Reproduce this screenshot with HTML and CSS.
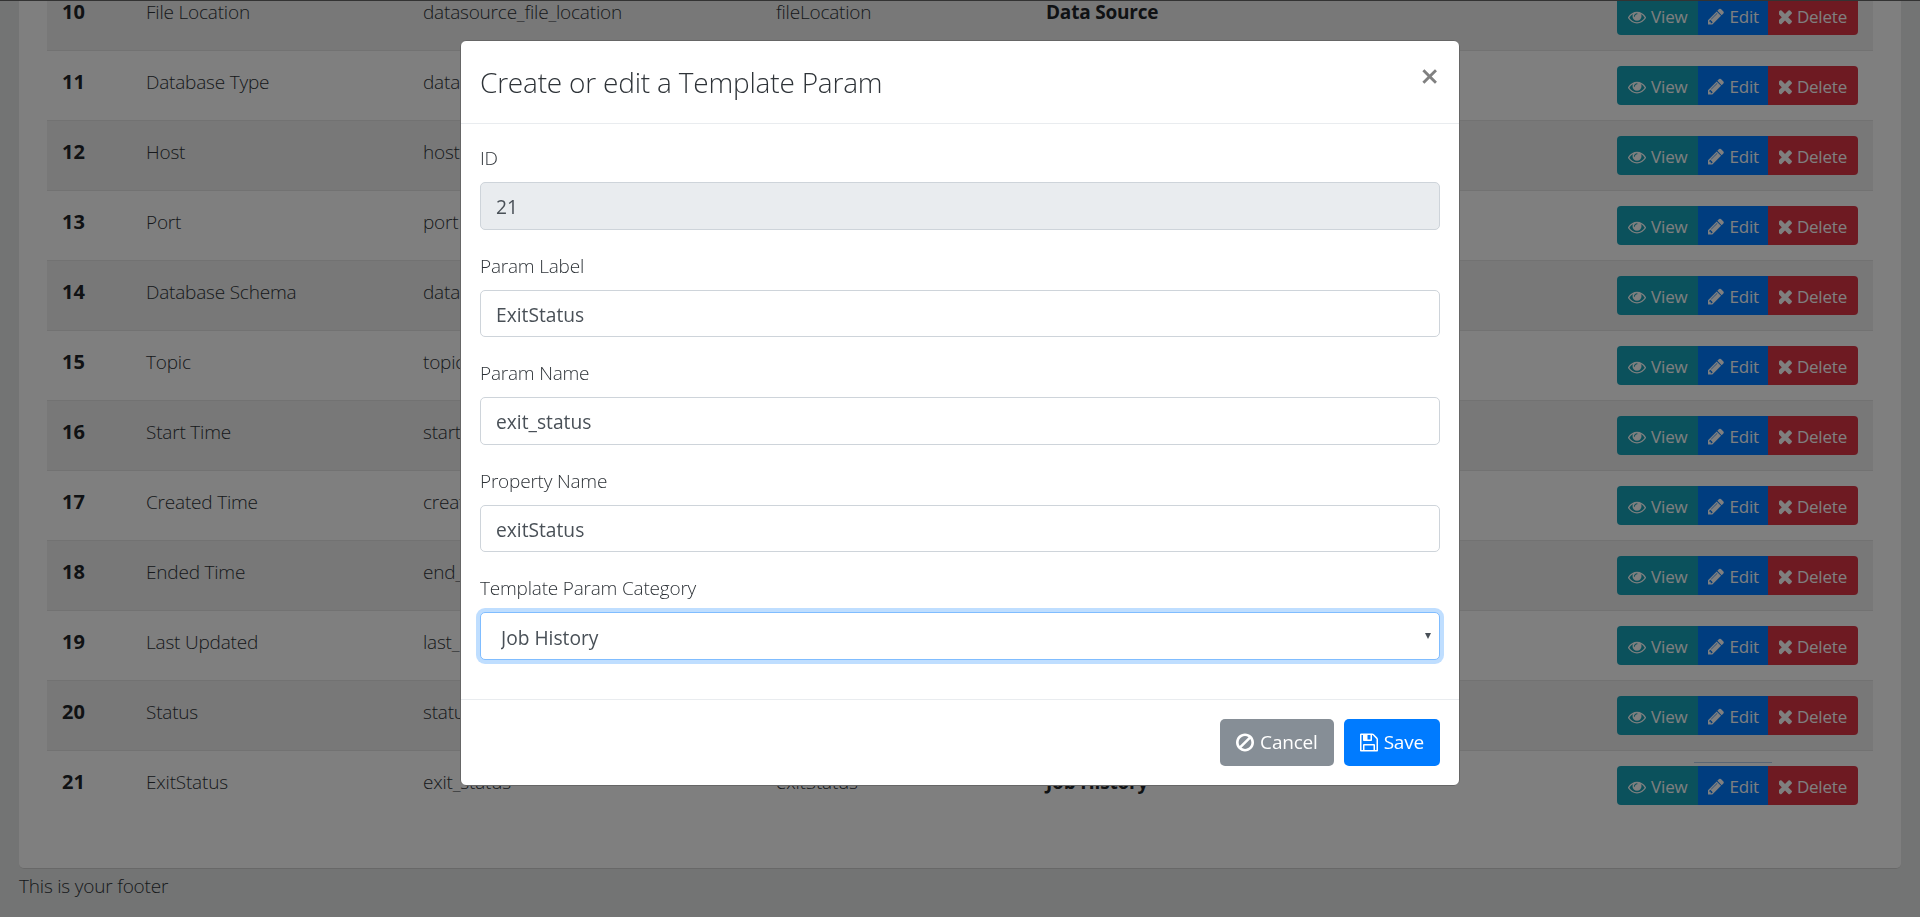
FILE: index.html
```html
<!DOCTYPE html>
<html lang="en">

<head>
    <meta charset="UTF-8">
    <title>Template Params</title>
    <link rel="stylesheet" href="styles.css">
</head>

<body>
    <svg class="icon-defs" xmlns="http://www.w3.org/2000/svg">
        <symbol id="i-eye" viewBox="0 0 1792 1792"><path d="M1664 960q-152-236-381-355 61 104 61 225 0 185-131.5 316.5t-316.5 131.5-316.5-131.5-131.5-316.5q0-121 61-225-229 119-381 355 133 205 333.5 326.5t434.5 121.5 434.5-121.5 333.5-326.5zm-720-384q0-20-14-34t-34-14q-125 0-214.5 89.5t-89.5 214.5q0 20 14 34t34 14 34-14 14-34q0-86 61-147t147-61q20 0 34-14t14-34zm848 384q0 34-20 69-140 230-376.5 368.5t-499.5 138.5-499.5-139-376.5-368q-20-35-20-69t20-69q140-229 376.5-368t499.5-139 499.5 139 376.5 368q20 35 20 69z"/></symbol>
        <symbol id="i-pencil" viewBox="128 0 1536 1792"><path d="M491 1536l91-91-235-235-91 91v107h128v128h107zm523-928q0-22-22-22-10 0-17 7l-542 542q-7 7-7 17 0 22 22 22 10 0 17-7l542-542q7-7 7-17zm-54-192l416 416-832 832h-416v-416zm683 96q0 53-37 90l-166 166-416-416 166-165q36-38 90-38 53 0 91 38l235 234q37 39 37 91z"/></symbol>
        <symbol id="i-times" viewBox="194 0 1104 1792"><path d="M1298 1322q0 40-28 68l-136 136q-28 28-68 28t-68-28l-294-294-294 294q-28 28-68 28t-68-28l-136-136q-28-28-28-68t28-68l294-294-294-294q-28-28-28-68t28-68l136-136q28-28 68-28t68 28l294 294 294-294q28-28 68-28t68 28l136 136q28 28 28 68t-28 68l-294 294 294 294q28 28 28 68z"/></symbol>
        <symbol id="i-ban" viewBox="128 0 1536 1792"><path d="M1440 893q0-161-87-295l-754 753q137 89 297 89 111 0 211.5-43.5t173.5-116.5 116-174.5 43-212.5zm-999 299l755-754q-135-91-300-91-148 0-273 73t-198 199-73 274q0 162 89 299zm1223-299q0 157-61 300t-163.5 246-245 164-298.5 61-298.5-61-245-164-163.5-246-61-300 61-299.5 163.5-245.5 245-164 298.5-61 298.5 61 245 164 163.5 245.5 61 299.5z"/></symbol>
        <symbol id="i-save" viewBox="128 0 1536 1792"><path d="M512 1536h768v-384h-768v384zm896 0h128v-896q0-14-10-38.5t-20-34.5l-281-281q-10-10-34-20t-39-10v416q0 40-28 68t-68 28h-576q-40 0-68-28t-28-68v-416h-128v1280h128v-416q0-40 28-68t68-28h832q40 0 68 28t28 68v416zm-384-928v-320q0-13-9.5-22.5t-22.5-9.5h-192q-13 0-22.5 9.5t-9.5 22.5v320q0 13 9.5 22.5t22.5 9.5h192q13 0 22.5-9.5t9.5-22.5zm640 32v928q0 40-28 68t-68 28h-1344q-40 0-68-28t-28-68v-1344q0-40 28-68t68-28h928q40 0 88 20t76 48l280 280q28 28 48 76t20 88z"/></symbol>
    </svg>

    <div class="page">
        <div class="card">
            <table class="params">
                <colgroup>
                    <col class="col-id">
                    <col class="col-label">
                    <col class="col-name">
                    <col class="col-prop">
                    <col class="col-cat">
                    <col>
                </colgroup>
                <tbody>
                    <tr>
                        <th>10</th>
                        <td>File Location</td>
                        <td>datasource_file_location</td>
                        <td>fileLocation</td>
                        <td class="cat">Data Source</td>
                        <td>
                            <div class="btn-group"><a class="btn btn-view"><svg class="icon icon-eye"><use href="#i-eye"/></svg>View</a><a class="btn btn-edit"><svg class="icon icon-pencil"><use href="#i-pencil"/></svg>Edit</a><a class="btn btn-delete"><svg class="icon icon-times"><use href="#i-times"/></svg>Delete</a></div>
                        </td>
                    </tr>
                    <tr>
                        <th>11</th>
                        <td>Database Type</td>
                        <td>database_type</td>
                        <td>databaseType</td>
                        <td class="cat">Data Source</td>
                        <td>
                            <div class="btn-group"><a class="btn btn-view"><svg class="icon icon-eye"><use href="#i-eye"/></svg>View</a><a class="btn btn-edit"><svg class="icon icon-pencil"><use href="#i-pencil"/></svg>Edit</a><a class="btn btn-delete"><svg class="icon icon-times"><use href="#i-times"/></svg>Delete</a></div>
                        </td>
                    </tr>
                    <tr>
                        <th>12</th>
                        <td>Host</td>
                        <td>host</td>
                        <td>host</td>
                        <td class="cat">Data Source</td>
                        <td>
                            <div class="btn-group"><a class="btn btn-view"><svg class="icon icon-eye"><use href="#i-eye"/></svg>View</a><a class="btn btn-edit"><svg class="icon icon-pencil"><use href="#i-pencil"/></svg>Edit</a><a class="btn btn-delete"><svg class="icon icon-times"><use href="#i-times"/></svg>Delete</a></div>
                        </td>
                    </tr>
                    <tr>
                        <th>13</th>
                        <td>Port</td>
                        <td>port</td>
                        <td>port</td>
                        <td class="cat">Data Source</td>
                        <td>
                            <div class="btn-group"><a class="btn btn-view"><svg class="icon icon-eye"><use href="#i-eye"/></svg>View</a><a class="btn btn-edit"><svg class="icon icon-pencil"><use href="#i-pencil"/></svg>Edit</a><a class="btn btn-delete"><svg class="icon icon-times"><use href="#i-times"/></svg>Delete</a></div>
                        </td>
                    </tr>
                    <tr>
                        <th>14</th>
                        <td>Database Schema</td>
                        <td>database_schema</td>
                        <td>databaseSchema</td>
                        <td class="cat">Data Source</td>
                        <td>
                            <div class="btn-group"><a class="btn btn-view"><svg class="icon icon-eye"><use href="#i-eye"/></svg>View</a><a class="btn btn-edit"><svg class="icon icon-pencil"><use href="#i-pencil"/></svg>Edit</a><a class="btn btn-delete"><svg class="icon icon-times"><use href="#i-times"/></svg>Delete</a></div>
                        </td>
                    </tr>
                    <tr>
                        <th>15</th>
                        <td>Topic</td>
                        <td>topic</td>
                        <td>topic</td>
                        <td class="cat">Data Source</td>
                        <td>
                            <div class="btn-group"><a class="btn btn-view"><svg class="icon icon-eye"><use href="#i-eye"/></svg>View</a><a class="btn btn-edit"><svg class="icon icon-pencil"><use href="#i-pencil"/></svg>Edit</a><a class="btn btn-delete"><svg class="icon icon-times"><use href="#i-times"/></svg>Delete</a></div>
                        </td>
                    </tr>
                    <tr>
                        <th>16</th>
                        <td>Start Time</td>
                        <td>start_time</td>
                        <td>startTime</td>
                        <td class="cat">Job History</td>
                        <td>
                            <div class="btn-group"><a class="btn btn-view"><svg class="icon icon-eye"><use href="#i-eye"/></svg>View</a><a class="btn btn-edit"><svg class="icon icon-pencil"><use href="#i-pencil"/></svg>Edit</a><a class="btn btn-delete"><svg class="icon icon-times"><use href="#i-times"/></svg>Delete</a></div>
                        </td>
                    </tr>
                    <tr>
                        <th>17</th>
                        <td>Created Time</td>
                        <td>created_time</td>
                        <td>createdTime</td>
                        <td class="cat">Job History</td>
                        <td>
                            <div class="btn-group"><a class="btn btn-view"><svg class="icon icon-eye"><use href="#i-eye"/></svg>View</a><a class="btn btn-edit"><svg class="icon icon-pencil"><use href="#i-pencil"/></svg>Edit</a><a class="btn btn-delete"><svg class="icon icon-times"><use href="#i-times"/></svg>Delete</a></div>
                        </td>
                    </tr>
                    <tr>
                        <th>18</th>
                        <td>Ended Time</td>
                        <td>end_time</td>
                        <td>endTime</td>
                        <td class="cat">Job History</td>
                        <td>
                            <div class="btn-group"><a class="btn btn-view"><svg class="icon icon-eye"><use href="#i-eye"/></svg>View</a><a class="btn btn-edit"><svg class="icon icon-pencil"><use href="#i-pencil"/></svg>Edit</a><a class="btn btn-delete"><svg class="icon icon-times"><use href="#i-times"/></svg>Delete</a></div>
                        </td>
                    </tr>
                    <tr>
                        <th>19</th>
                        <td>Last Updated</td>
                        <td>last_updated</td>
                        <td>lastUpdated</td>
                        <td class="cat">Job History</td>
                        <td>
                            <div class="btn-group"><a class="btn btn-view"><svg class="icon icon-eye"><use href="#i-eye"/></svg>View</a><a class="btn btn-edit"><svg class="icon icon-pencil"><use href="#i-pencil"/></svg>Edit</a><a class="btn btn-delete"><svg class="icon icon-times"><use href="#i-times"/></svg>Delete</a></div>
                        </td>
                    </tr>
                    <tr>
                        <th>20</th>
                        <td>Status</td>
                        <td>status</td>
                        <td>status</td>
                        <td class="cat">Job History</td>
                        <td>
                            <div class="btn-group"><a class="btn btn-view"><svg class="icon icon-eye"><use href="#i-eye"/></svg>View</a><a class="btn btn-edit"><svg class="icon icon-pencil"><use href="#i-pencil"/></svg>Edit</a><a class="btn btn-delete"><svg class="icon icon-times"><use href="#i-times"/></svg>Delete</a></div>
                        </td>
                    </tr>
                    <tr>
                        <th>21</th>
                        <td>ExitStatus</td>
                        <td>exit_status</td>
                        <td>exitStatus</td>
                        <td class="cat">Job History</td>
                        <td>
                            <div class="btn-group"><a class="btn btn-view"><svg class="icon icon-eye"><use href="#i-eye"/></svg>View</a><a class="btn btn-edit btn-focused"><svg class="icon icon-pencil"><use href="#i-pencil"/></svg>Edit</a><a class="btn btn-delete"><svg class="icon icon-times"><use href="#i-times"/></svg>Delete</a></div>
                        </td>
                    </tr>
                </tbody>
            </table>
        </div>
        <footer class="footer">This is your footer</footer>
    </div>

    <div class="backdrop"></div>

    <div class="modal">
        <div class="modal-header">
            <h4 class="modal-title">Create or edit a Template Param</h4>
            <button class="close" type="button">&times;</button>
        </div>
        <form class="modal-body">
            <div class="form-group">
                <label for="id">ID</label>
                <input class="form-control" type="text" id="id" value="21" readonly>
            </div>
            <div class="form-group">
                <label for="paramLabel">Param Label</label>
                <input class="form-control" type="text" id="paramLabel" value="ExitStatus">
            </div>
            <div class="form-group">
                <label for="paramName">Param Name</label>
                <input class="form-control" type="text" id="paramName" value="exit_status">
            </div>
            <div class="form-group">
                <label for="propName">Property Name</label>
                <input class="form-control" type="text" id="propName" value="exitStatus">
            </div>
            <div class="form-group">
                <label for="category">Template Param Category</label>
                <div class="select-wrap">
                    <select class="form-control form-select" id="category">
                        <option>Job History</option>
                        <option>Data Source</option>
                    </select>
                </div>
            </div>
        </form>
        <div class="modal-footer">
            <button class="btn-lg btn-secondary" type="button"><svg class="icon icon-ban"><use href="#i-ban"/></svg>Cancel</button>
            <button class="btn-lg btn-primary" type="button"><svg class="icon icon-save"><use href="#i-save"/></svg>Save</button>
        </div>
    </div>
</body>

</html>
```

FILE: styles.css
```css
* {
    box-sizing: border-box;
}

html,
body {
    height: 917px;
    overflow: hidden;
}

body {
    margin: 0;
    font-family: "Open Sans", "Noto Sans", Arial, sans-serif;
    font-size: 19px;
    font-weight: 300;
    line-height: 30px;
    letter-spacing: -0.2px;
    color: #2e3338;
    background-color: #e6e9e8;
}

.icon-defs {
    display: none;
}

.icon {
    flex: none;
    height: 18px;
    fill: currentColor;
}

.icon-eye {
    width: 18px;
}

.icon-pencil {
    width: 16px;
    height: 19px;
}

.icon-times {
    width: 13px;
    height: 21px;
}

.icon-ban {
    width: 18px;
    height: 21px;
}

.icon-save {
    width: 18px;
    height: 21px;
}

/* page under the dialog, scrolled down to row 10 */
.page {
    margin-top: -20px;
    padding: 0 19px;
}

.card {
    height: 889px;
    padding: 0 28px;
    background-color: #fff;
    border-bottom: 1px solid #d0d0d0;
    border-radius: 0 0 5px 5px;
}

.params {
    width: 100%;
    table-layout: fixed;
    border-collapse: collapse;
}

.col-id {
    width: 84px;
}

.col-label {
    width: 277px;
}

.col-name {
    width: 353px;
}

.col-prop {
    width: 270px;
}

.col-cat {
    width: 270px;
}

.params tr {
    height: 70px;
}

.params tr:nth-child(odd) {
    background-color: #f0f0f0;
}

.params tr:last-child {
    background-color: transparent;
}

.params th,
.params td {
    padding: 16px 15px 14px;
    text-align: left;
    vertical-align: top;
    white-space: nowrap;
    border-top: 1px solid #e4e4e4;
}

.params th {
    font-size: 20px;
    font-weight: 700;
    letter-spacing: 0;
    color: #212529;
}

.params .cat {
    font-weight: 700;
    color: #212529;
}

.btn-group {
    display: flex;
    justify-content: flex-end;
    margin-top: -1px;
}

.btn {
    position: relative;
    display: flex;
    align-items: center;
    gap: 5px;
    height: 39px;
    padding: 2px 11px 0;
    font-size: 17px;
    font-weight: 400;
    color: #fff;
}

.btn-view {
    background-color: #17a2b8;
    border-radius: 4px 0 0 4px;
}

.btn-edit {
    padding: 2px 9px 0 10px;
    background-color: #007bff;
}

.btn-delete {
    background-color: #dc3545;
    border-radius: 0 4px 4px 0;
}

/* leftover focus ring line above the last edit button */
.btn-focused::before {
    content: "";
    position: absolute;
    left: -4px;
    right: -4px;
    top: -4px;
    height: 1px;
    background-color: #b4cde8;
}

.footer {
    padding-top: 2px;
}

.backdrop {
    position: fixed;
    top: 0;
    left: 0;
    right: 0;
    bottom: 0;
    background-color: rgba(0, 0, 0, 0.5);
    border-top: 1px solid #333;
}

.modal {
    position: fixed;
    top: 40px;
    left: 460px;
    width: 1000px;
    background-color: #fff;
    border: 1px solid #666;
    border-radius: 6px;
}

.modal-header {
    display: flex;
    justify-content: space-between;
    align-items: flex-start;
    height: 83px;
    padding: 19px 19px 0;
    border-bottom: 1px solid #e9ecef;
}

.modal-title {
    margin: 0;
    font-size: 28px;
    font-weight: 300;
    line-height: 45px;
}

.close {
    margin-top: 1px;
    margin-right: 1px;
    padding: 0;
    border: none;
    background: none;
    font-family: inherit;
    font-size: 33px;
    font-weight: 600;
    line-height: 30px;
    color: #808080;
}

.modal-body {
    padding: 18px 19px 19px;
}

.form-group {
    margin-bottom: 20px;
}

label {
    display: block;
    margin-bottom: 9px;
    padding-top: 1px;
}

.form-control {
    display: block;
    width: 100%;
    height: 47.5px;
    padding: 2px 15px 0;
    font-family: inherit;
    font-size: 19.2px;
    font-weight: 400;
    letter-spacing: 0;
    color: #495057;
    background-color: #fff;
    border: 1px solid #ced4da;
    border-radius: 5px;
}

.form-control[readonly] {
    background-color: #e9ecef;
}

.select-wrap {
    position: relative;
}

.select-wrap::after {
    content: "";
    position: absolute;
    right: 9px;
    top: 21px;
    border-top: 6px solid #495057;
    border-left: 3px solid transparent;
    border-right: 3px solid transparent;
}

.form-select {
    padding: 3px 15px 0 20px;
    appearance: none;
    border-color: #80bdff;
    outline: none;
    box-shadow: 0 0 0 4px rgba(0, 123, 255, 0.25);
}

.modal-footer {
    display: flex;
    justify-content: flex-end;
    gap: 10px;
    padding: 19px;
    border-top: 1px solid #e9ecef;
}

.btn-lg {
    display: flex;
    align-items: center;
    gap: 6px;
    height: 47.5px;
    padding: 0 16px;
    font-family: inherit;
    font-size: 19px;
    font-weight: 400;
    letter-spacing: -0.2px;
    color: #fff;
    border: none;
    border-radius: 5px;
}

.btn-secondary {
    background-color: #868e96;
}

.btn-primary {
    background-color: #007bff;
}
```
